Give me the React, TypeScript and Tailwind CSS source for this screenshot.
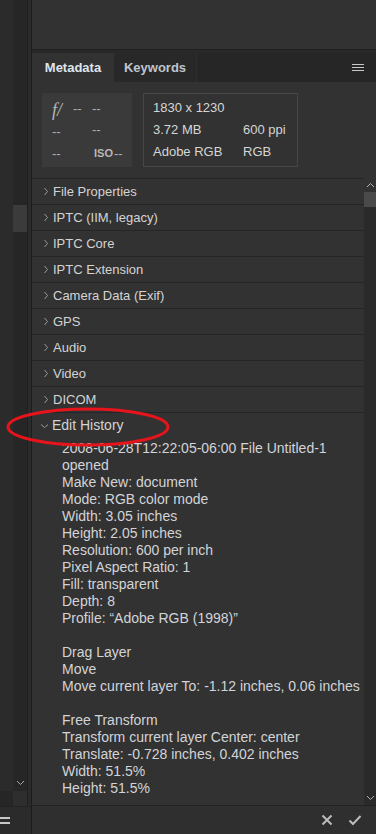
import React from "react";

const rows = [
  "File Properties",
  "IPTC (IIM, legacy)",
  "IPTC Core",
  "IPTC Extension",
  "Camera Data (Exif)",
  "GPS",
  "Audio",
  "Video",
  "DICOM",
];

const history = [
  "2008-06-28T12:22:05-06:00 File Untitled-1",
  "opened",
  "Make New: document",
  "Mode: RGB color mode",
  "Width: 3.05 inches",
  "Height: 2.05 inches",
  "Resolution: 600 per inch",
  "Pixel Aspect Ratio: 1",
  "Fill: transparent",
  "Depth: 8",
  "Profile:  \u201CAdobe RGB (1998)\u201D",
  "",
  "Drag Layer",
  "Move",
  "Move current layer To: -1.12 inches, 0.06 inches",
  "",
  "Free Transform",
  "Transform current layer Center: center",
  "Translate: -0.728 inches, 0.402 inches",
  "Width: 51.5%",
  "Height: 51.5%",
  "",
];

function ChevronRight() {
  return (
    <svg width="6" height="9" viewBox="0 0 6 9" className="shrink-0">
      <polyline points="1.5,1 4.5,4.5 1.5,8" fill="none" stroke="#9a9a9a" strokeWidth="1" />
    </svg>
  );
}

function ChevronDown() {
  return (
    <svg width="9" height="6" viewBox="0 0 9 6" className="shrink-0">
      <polyline points="1,1.5 4.5,4.5 8,1.5" fill="none" stroke="#9a9a9a" strokeWidth="1" />
    </svg>
  );
}

export default function App() {
  return (
    <div
      className="relative flex w-[376px] h-[834px] overflow-hidden bg-[#2b2b2b] text-[#d4d4d4]"
      style={{ fontFamily: '"Liberation Sans", Arial, sans-serif' }}
    >
      {/* Left column */}
      <div className="flex w-[31px] flex-col">
        <div className="flex flex-1">
          <div className="w-[13px] bg-[#2b2b2b]" />
          <div className="flex w-[14px] flex-col bg-[#262626]">
            <div className="h-[205px]" />
            <div className="h-[27px] bg-[#3b3b3b]" />
            <div className="flex-1" />
            <div className="flex h-[14px] items-center justify-center pb-[2px]">
              <svg width="9" height="6" viewBox="0 0 9 6">
                <polyline points="1,1 4.5,4.5 8,1" fill="none" stroke="#a8a8a8" strokeWidth="1" />
              </svg>
            </div>
          </div>
          <div className="w-[4px] border-l border-[#1f1f1f] bg-[#2b2b2b]" />
        </div>
        <div className="flex h-[15px]">
          <div className="w-[13px] bg-[#262626]" />
          <div className="w-[14px] bg-[#2e2e2e]" />
          <div className="w-[4px] border-l border-[#1f1f1f]" />
        </div>
        <div className="flex h-[28px] items-center border-t border-[#222222]">
          <div className="flex w-[10px] flex-col gap-[3px]">
            <div className="h-[2px] bg-[#c8c8c8]" />
            <div className="h-[2px] bg-[#c8c8c8]" />
          </div>
        </div>
      </div>

      {/* Divider */}
      <div className="w-px bg-[#1c1c1c]" />

      {/* Right column */}
      <div className="flex flex-1 flex-col">
        <div className="h-[49px] bg-[#323232]" />
        <div className="h-px bg-[#1f1f1f]" />
        <div className="h-[3px] bg-[#282828]" />
        {/* Tabs */}
        <div className="flex h-[29px] items-stretch bg-[#262626]">
          <div className="flex w-[82px] items-center justify-center bg-[#323232] pt-px text-[13px] font-bold text-[#dfe5ee]">
            Metadata
          </div>
          <div className="flex w-[83px] items-center justify-center border-r border-[#2e2e2e] bg-[#282828] pt-px text-[13px] font-bold text-[#bfc5ce]">
            Keywords
          </div>
          <div className="flex-1" />
          <div className="flex w-[24px] flex-col items-start justify-center gap-[2px] pr-[12px]">
            <div className="h-px w-[12px] bg-[#c8c8c8]" />
            <div className="h-px w-[12px] bg-[#c8c8c8]" />
            <div className="h-px w-[12px] bg-[#c8c8c8]" />
          </div>
        </div>
        {/* Info boxes */}
        <div className="flex h-[96px] items-start gap-[11px] bg-[#323232] pl-[10px] pt-[11px]">
          <div className="relative h-[74px] w-[90px] bg-[#3a3a3a] text-[13px] text-[#b0b0b0]">
            <div className="absolute left-[10px] top-[4px] text-[18px] italic text-[#b8b8b8]" style={{ fontFamily: '"Liberation Serif", serif' }}>
              f/
            </div>
            <div className="absolute left-[31px] top-[6px]">--</div>
            <div className="absolute left-[50px] top-[6px]">--</div>
            <div className="absolute left-[10px] top-[29px]">--</div>
            <div className="absolute left-[50px] top-[27px]">--</div>
            <div className="absolute left-[10px] top-[51px]">--</div>
            <div className="absolute left-[52px] top-[52px] text-[11px] font-bold text-[#b8b8b8]">ISO</div>
            <div className="absolute left-[72px] top-[51px]">--</div>
          </div>
          <div className="grid h-[74px] w-[155px] grid-cols-[90px_1fr] content-center gap-y-[6px] border border-[#464646] pl-[9px] text-[13px] leading-[16px] text-[#d6d6d6]">
            <div className="col-span-2">1830 x 1230</div>
            <div>3.72 MB</div>
            <div>600 ppi</div>
            <div>Adobe RGB</div>
            <div>RGB</div>
          </div>
        </div>
        {/* List + scrollbar */}
        <div className="flex min-h-0 flex-1">
          <div className="flex min-w-0 flex-1 flex-col overflow-hidden bg-[#323232]">
            {rows.map((r) => (
              <div
                key={r}
                className="flex h-[26px] shrink-0 items-center gap-[4px] border-t border-[#262626] pl-[11px] text-[13px] text-[#d4d4d4]"
              >
                <ChevronRight />
                <span>{r}</span>
              </div>
            ))}
            <div className="flex h-[26px] shrink-0 items-center gap-[3px] border-t border-[#262626] pl-[8px] text-[14px] text-[#d4d4d4]">
              <ChevronDown />
              <span>Edit History</span>
            </div>
            <div className="flex flex-col pl-[30px] pt-[2px] text-[14px] leading-[17px] text-[#d2d4d8] whitespace-nowrap">
              {history.map((h, i) => (
                <div key={i} className="h-[17px]">
                  {h}
                </div>
              ))}
            </div>
          </div>
          <div className="flex w-[12px] flex-col bg-[#2a2a2a]">
            <div className="flex h-[14px] items-center justify-center bg-[#323232]">
              <svg width="9" height="6" viewBox="0 0 9 6">
                <polyline points="1,5 4.5,1.5 8,5" fill="none" stroke="#b0b0b0" strokeWidth="1" />
              </svg>
            </div>
            <div className="h-[15px] bg-[#4a4a4a]" />
            <div className="flex-1" />
            <div className="flex h-[14px] items-center justify-center">
              <svg width="9" height="6" viewBox="0 0 9 6">
                <polyline points="1,1 4.5,4.5 8,1" fill="none" stroke="#b0b0b0" strokeWidth="1" />
              </svg>
            </div>
          </div>
        </div>
        {/* Bottom bar */}
        <div className="flex h-[29px] items-center justify-end gap-[15px] border-t border-[#222222] bg-[#2f2f2f] pr-[14px]">
          <svg width="12" height="12" viewBox="0 0 12 12">
            <path d="M1.5 1.5 L10.5 10.5 M10.5 1.5 L1.5 10.5" stroke="#bdbdbd" strokeWidth="2" fill="none" />
          </svg>
          <svg width="14" height="12" viewBox="0 0 14 12">
            <path d="M1.5 6.5 L5 10 L12.5 2" stroke="#bdbdbd" strokeWidth="2" fill="none" />
          </svg>
        </div>
      </div>

      {/* Red annotation ellipse */}
      <svg className="pointer-events-none absolute left-[5px] top-[406px]" width="166" height="42" viewBox="0 0 166 42">
        <ellipse cx="83" cy="21" rx="80" ry="18" fill="none" stroke="#e8141b" strokeWidth="3" />
      </svg>
    </div>
  );
}
